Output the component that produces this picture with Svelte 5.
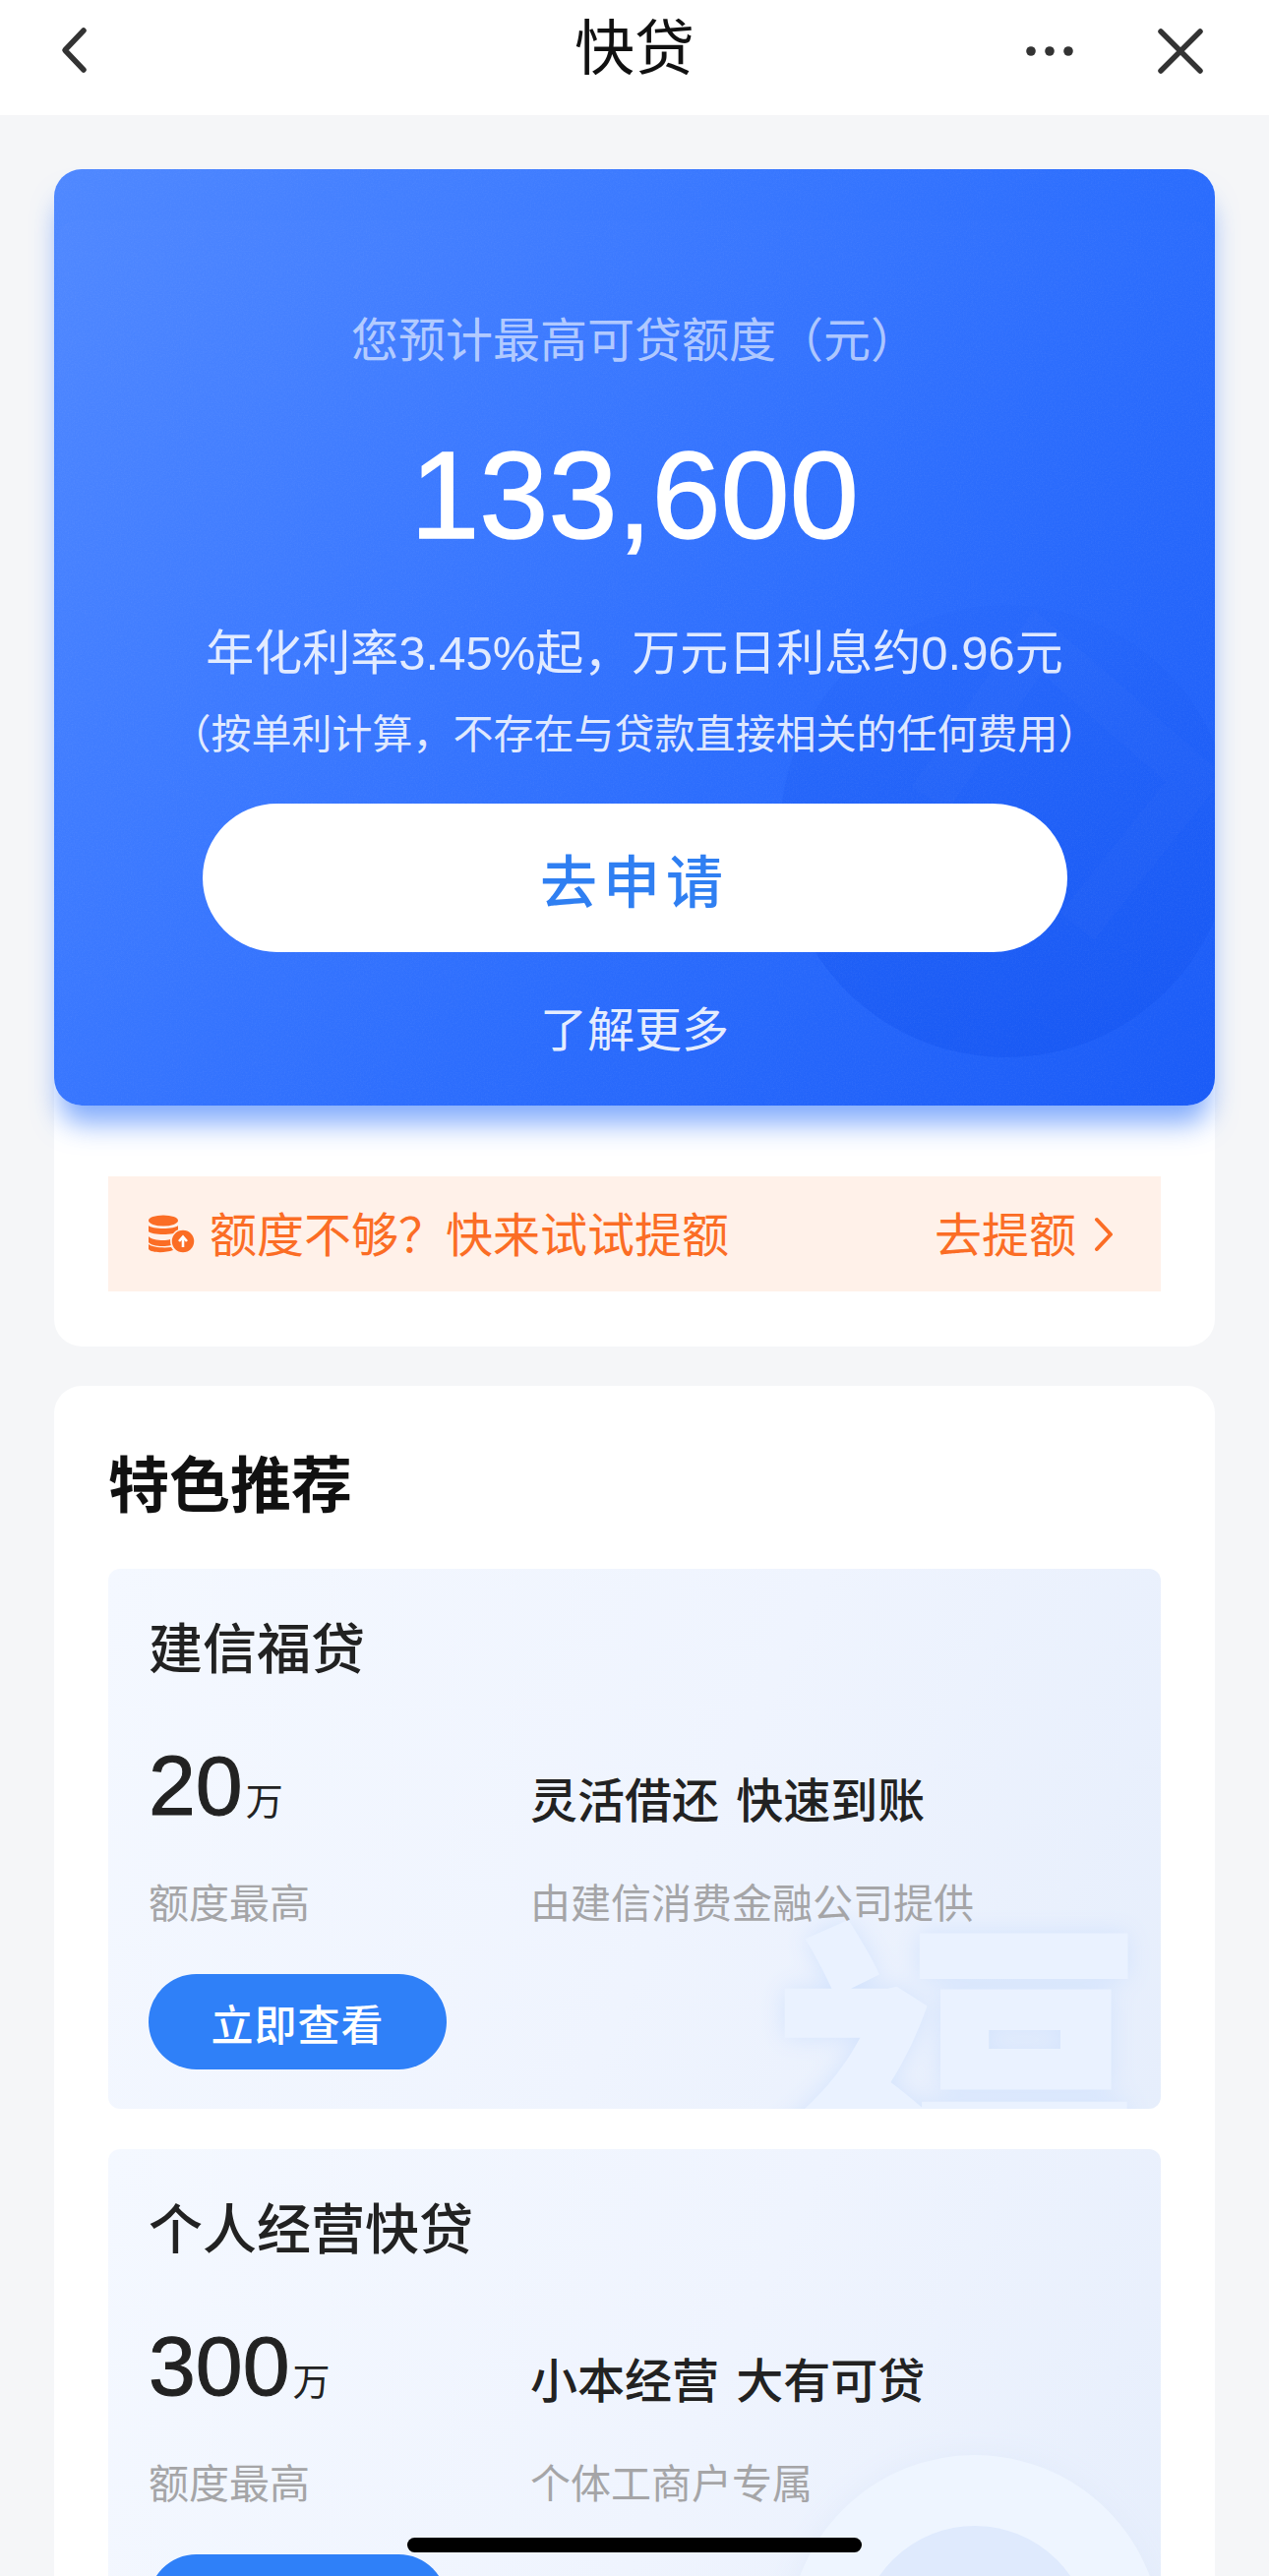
<script>
	const products = [
		{ name: "建信福贷", amount: "20", slogan: "灵活借还 快速到账", note: "由建信消费金融公司提供", mark: "fu" },
		{ name: "个人经营快贷", amount: "300", slogan: "小本经营 大有可贷", note: "个体工商户专属", mark: "ring" }
	];
</script>

<div class="page">
	<header class="nav">
		<svg class="back" viewBox="0 0 30 48" width="30" height="48">
			<path d="M25 4 6 24l19 20" fill="none" stroke="#333" stroke-width="5.500" stroke-linecap="round" stroke-linejoin="round" />
		</svg>
		<h1>快贷</h1>
		<div class="nav-actions">
			<svg viewBox="0 0 48 10" width="48" height="10">
				<circle cx="5" cy="5" r="4.800" fill="#333" />
				<circle cx="24" cy="5" r="4.800" fill="#333" />
				<circle cx="43" cy="5" r="4.800" fill="#333" />
			</svg>
			<svg viewBox="0 0 46 46" width="46" height="46">
				<path d="M3 3l40 40M43 3 3 43" fill="none" stroke="#333" stroke-width="5.500" stroke-linecap="round" />
			</svg>
		</div>
	</header>

	<main class="content">
		<section class="quota-panel">
			<div class="hero">
				<svg class="hero-mark" viewBox="0 0 1180 952" width="1180" height="952">
					<defs>
						<linearGradient id="disc" x1="0" y1="0" x2="0" y2="1">
							<stop offset="0" stop-color="#0f50ee" stop-opacity="0.06" />
							<stop offset="1" stop-color="#0f50ee" stop-opacity="0.42" />
						</linearGradient>
					</defs>
					<filter id="grain">
						<feTurbulence type="fractalNoise" baseFrequency="0.7" numOctaves="2" />
						<feColorMatrix values="0 0 0 0 1  0 0 0 0 1  0 0 0 0 1  0 0 0 1.400 -0.500" />
					</filter>
					<circle cx="968" cy="673" r="230" fill="url(#disc)" />
					<path d="M890 640 1000 480 1160 620 1040 770" fill="none" stroke="#4a84fb" stroke-width="44" opacity="0.08" />
					<rect width="1180" height="952" filter="url(#grain)" opacity="0.06" />
				</svg>
				<div class="hero-sheet"></div>
				<p class="hero-label">您预计最高可贷额度（元）</p>
				<p class="hero-amount">133,600</p>
				<p class="hero-rate">年化利率3.45%起，万元日利息约0.96元</p>
				<p class="hero-hint">（按单利计算，不存在与贷款直接相关的任何费用）</p>
				<button class="apply" type="button">去申请</button>
				<p class="more">了解更多</p>
			</div>
			<div class="raise">
				<svg viewBox="0 0 48 40" width="48" height="40">
					<g fill="#fb6d25">
						<ellipse cx="16" cy="6" rx="15" ry="5.500" />
						<path d="M1 11c3 4 27 4 30 0v6c-3 4-27 4-30 0z" />
						<path d="M1 22c3 4 17 5 22 3l1 6c-8 2-20 1-23-3z" />
						<path d="M1 30c3 3 15 4 23 3l2 3c-8 3-22 3-25-1z" />
						<circle cx="36" cy="27" r="12" stroke="#fff1e9" stroke-width="1.500" />
					</g>
					<path d="M36 33v-10M32 27l4-4.500 4 4.500" fill="none" stroke="#fff" stroke-width="2.600" />
				</svg>
				<span class="raise-text">额度不够？快来试试提额</span>
				<span class="raise-link">去提额</span>
				<svg viewBox="0 0 20 36" width="20" height="36">
					<path d="M3 3l14 15L3 33" fill="none" stroke="#fb6d25" stroke-width="4" stroke-linecap="round" stroke-linejoin="round" />
				</svg>
			</div>
		</section>

		<section class="featured">
			<h2>特色推荐</h2>
			{#each products as item}
				<article class="product">
					{#if item.mark === "fu"}
						<span class="mark-fu">福</span>
					{:else}
						<span class="mark-ring"></span>
					{/if}
					<h3>{item.name}</h3>
					<div class="product-grid">
						<div class="amount"><b>{item.amount}</b><span>万</span></div>
						<div class="slogan">{item.slogan}</div>
						<div class="muted">额度最高</div>
						<div class="muted">{item.note}</div>
					</div>
					<button class="view" type="button">立即查看</button>
				</article>
			{/each}
		</section>
	</main>

	<div class="home-bar"></div>
</div>

<style>
	:global(body) {
		margin: 0;
		background: #f5f6f8;
	}

	.page {
		position: relative;
		height: 2619px;
		overflow: hidden;
		background: #f5f6f8;
		font-family: "Liberation Sans", "Noto Sans CJK SC", sans-serif;
		color: #222;
	}

	p,
	h1,
	h2,
	h3 {
		margin: 0;
		font-weight: 400;
	}

	.nav {
		position: relative;
		height: 117px;
		background: #fff;
		display: flex;
		justify-content: center;
	}

	.nav h1 {
		font-size: 61px;
		color: #111;
		line-height: 100px;
	}

	.back {
		position: absolute;
		left: 60px;
		top: 27px;
	}

	.nav-actions {
		position: absolute;
		right: 67px;
		top: 29px;
		display: flex;
		align-items: center;
		gap: 86px;
	}

	.content {
		padding: 55px 55px 0;
		display: flex;
		flex-direction: column;
		gap: 40px;
	}

	.quota-panel {
		background: #fff;
		border-radius: 28px;
		padding-bottom: 56px;
	}

	.hero {
		position: relative;
		height: 952px;
		border-radius: 28px;
		background: linear-gradient(130deg, #4f88ff 0%, #3c7aff 30%, #2a6cfd 60%, #185af7 100%);
		box-shadow: 0 24px 28px -6px rgba(45, 115, 250, 0.6);
		text-align: center;
		color: #fff;
		display: flex;
		flex-direction: column;
		align-items: center;
	}

	.hero-mark {
		position: absolute;
		left: 0;
		top: 0;
		border-radius: 28px;
	}

	.hero-sheet {
		position: absolute;
		inset: 52px 3px 0;
		border-radius: 20px;
		background: rgba(255, 255, 255, 0.012);
	}

	.hero-label {
		position: relative;
		margin-top: 142px;
		font-size: 48px;
		line-height: 66px;
		color: rgba(255, 255, 255, 0.62);
	}

	.hero-amount {
		position: relative;
		margin-top: 49px;
		font-size: 126px;
		line-height: 150px;
		-webkit-text-stroke: 1.5px #fff;
	}

	.hero-rate {
		position: relative;
		margin-top: 51px;
		font-size: 49px;
		line-height: 68px;
		color: rgba(255, 255, 255, 0.85);
	}

	.hero-hint {
		position: relative;
		margin-top: 21px;
		font-size: 41px;
		line-height: 56px;
		color: rgba(255, 255, 255, 0.85);
	}

	.apply {
		position: relative;
		margin-top: 42px;
		width: 879px;
		height: 151px;
		border: none;
		border-radius: 76px;
		background: #fff;
		color: #2f7ff2;
		font: 500 58px "Noto Sans CJK SC", sans-serif;
		letter-spacing: 6px;
	}

	.more {
		position: relative;
		margin-top: 45px;
		font-size: 48px;
		line-height: 70px;
		color: rgba(255, 255, 255, 0.9);
	}

	.raise {
		margin: 72px 55px 0;
		height: 117px;
		padding: 0 48px 5px 40px;
		box-sizing: border-box;
		background: #fff1e9;
		color: #fb6d25;
		font-size: 48px;
		display: flex;
		align-items: center;
		gap: 15px;
	}

	.raise svg {
		flex: none;
		margin-top: 5px;
	}

	.raise-text {
		flex: 1;
	}

	.raise-link {
		margin-right: 3px;
	}

	.featured {
		background: #fff;
		border-radius: 28px;
		padding: 0 55px;
		height: 1300px;
	}

	.featured h2 {
		padding-top: 61px;
		font-size: 62px;
		font-weight: 700;
		line-height: 84px;
		color: #111;
		margin-bottom: 41px;
	}

	.product {
		position: relative;
		overflow: hidden;
		height: 549px;
		box-sizing: border-box;
		margin-bottom: 41px;
		padding: 44px 41px 0;
		border-radius: 12px;
		background: linear-gradient(115deg, #f4f8ff 0%, #eff4fe 55%, #e6eefc 100%);
	}

	.product h3 {
		position: relative;
		font-size: 55px;
		font-weight: 500;
		line-height: 76px;
		color: #222;
	}

	.product-grid {
		position: relative;
		margin-top: 59px;
		display: grid;
		grid-template-columns: 388px 1fr;
		align-items: end;
		row-gap: 37px;
	}

	.amount {
		margin-bottom: 7px;
		margin-top: -7px;
	}

	.amount b {
		font-size: 86px;
		font-weight: 400;
		line-height: 96px;
		-webkit-text-stroke: 1px #222;
	}

	.amount span {
		font-size: 38px;
		margin-left: 3px;
	}

	.slogan {
		font-size: 48px;
		font-weight: 500;
		line-height: 76px;
		word-spacing: 4px;
	}

	.muted {
		font-size: 41px;
		line-height: 58px;
		color: #a5a5a7;
	}

	.view {
		position: relative;
		display: block;
		margin-top: 42px;
		width: 303px;
		height: 97px;
		border: none;
		border-radius: 49px;
		background: #2f80f8;
		color: #fff;
		font: 500 43px "Noto Sans CJK SC", sans-serif;
		letter-spacing: 1px;
	}

	.mark-fu {
		position: absolute;
		right: 15px;
		top: 325px;
		font-size: 385px;
		line-height: 385px;
		font-weight: 900;
		font-family: "Noto Sans CJK SC", sans-serif;
		color: #eaf2ff;
		text-shadow: 0 0 24px #d3e3fd;
	}

	.mark-ring {
		position: absolute;
		left: 691px;
		top: 311px;
		width: 236px;
		height: 236px;
		border-radius: 50%;
		border: 72px solid #eef5ff;
		background: #dfeafd;
		box-shadow: 0 0 30px #e2ebfb;
	}

	.home-bar {
		position: absolute;
		left: 414px;
		top: 2580px;
		width: 462px;
		height: 15px;
		border-radius: 8px;
		background: #000;
	}
</style>
